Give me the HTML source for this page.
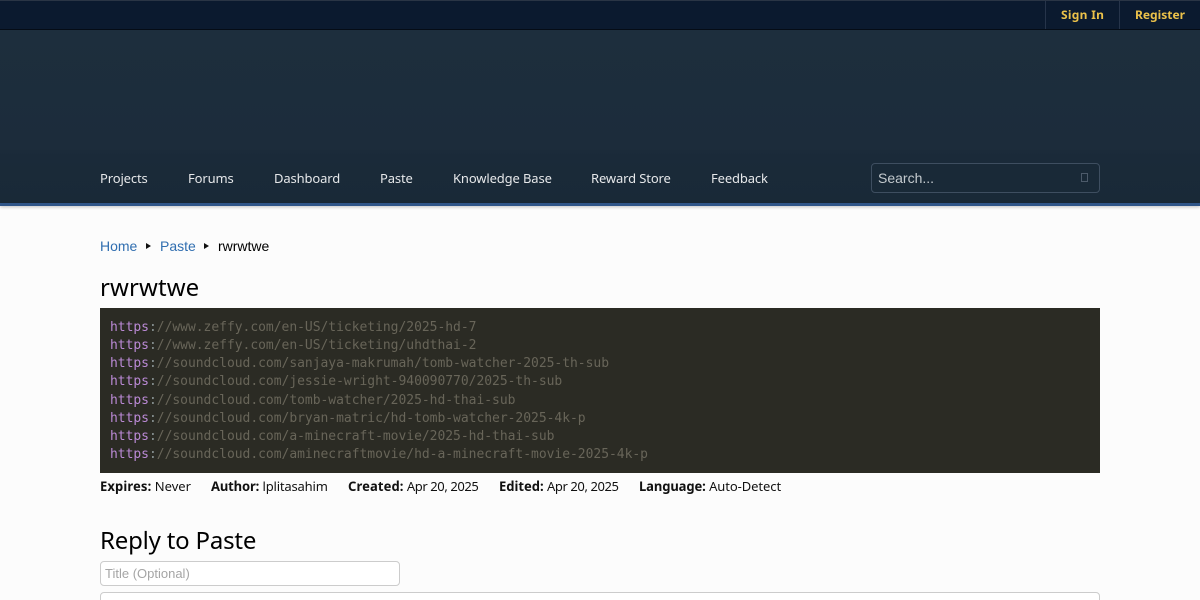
<!DOCTYPE html>
<html><head><meta charset="utf-8"><style>
*{box-sizing:border-box}
html,body{margin:0;padding:0;width:1200px;height:600px;overflow:hidden;background:#fcfcfc}
#page{position:relative;width:1200px;height:600px;overflow:hidden;background:#fcfcfc;font-family:"Noto Sans","Open Sans","Liberation Sans",sans-serif}
.abs{position:absolute;white-space:nowrap}
#top{position:absolute;left:0;top:0;width:1200px;height:30px;background:#0b1a2f;border-top:1px solid #2a3545;border-bottom:1px solid #050c16}
#hdr{position:absolute;left:0;top:30px;width:1200px;height:173px;background:linear-gradient(#1d2e3d 0,#1c2c3b 118px,#1a2a39 126px,#192937 100%)}
#line{position:absolute;left:0;top:203px;width:1200px;height:3px;background:#2f5588;box-shadow:0 1px 3px rgba(0,0,0,.25)}
.sep{position:absolute;top:1px;width:1px;height:28px;background:#26344a}
.tl{font-size:12px;font-weight:700;color:#ecc24a;top:7px;line-height:16px}
.nav{font-size:13px;color:#e6e8ea;top:169px;line-height:18px;letter-spacing:-.13px}
#search{position:absolute;left:871px;top:163px;width:229px;height:30px;border:1px solid #3e4e60;border-radius:4px;background:#192937}
#search span{position:absolute;left:6px;top:5px;font:14px/18px "Liberation Sans",sans-serif;color:#c4cace}
#search i{position:absolute;left:209px;top:9px;width:7px;height:9px;border:1px solid #4c5a6a}
.bc{font:14px/18px "Liberation Sans",sans-serif;top:237px}
.bc.a{color:#306eb0}
.ar{position:absolute;top:243px;width:0;height:0;border-left:5px solid #111;border-top:3px solid transparent;border-bottom:3px solid transparent}
h1,h2{margin:0;font-weight:400;color:#000;position:absolute;white-space:nowrap}
#code{position:absolute;left:100px;top:308px;width:1000px;height:165px;background:#2b2b24}
#code pre{position:absolute;left:10px;top:11px;margin:0;font:13px/18.14px "DejaVu Sans Mono",monospace;color:#686559;letter-spacing:-.03px}
#code b{font-weight:400;color:#bb8ad6}
#code u{text-decoration:none;color:#8a9394}
#meta{position:absolute;top:477px;left:100px;font-size:13px;line-height:18px;color:#111;white-space:nowrap}
#meta span{position:absolute;top:0}
#meta i{font-style:normal}
#t{position:absolute;left:100px;top:561px;width:300px;height:25px;background:#fff;border:1px solid #ccc;border-radius:4px;font:13px/23px "Liberation Sans",sans-serif;color:#a5a5a5;padding-left:4px}
#b{position:absolute;left:100px;top:592px;width:1000px;height:20px;background:#fff;border:1px solid #ccc;border-radius:4px}
</style></head><body><div id="page">
<div id="top"></div>
<div class="sep" style="left:1045px"></div>
<div class="sep" style="left:1119px"></div>
<div class="abs tl" style="left:1061px;letter-spacing:.3px">Sign In</div>
<div class="abs tl" style="left:1135px">Register</div>
<div id="hdr"></div>
<div id="line"></div>
<div class="abs nav" style="left:100px">Projects</div>
<div class="abs nav" style="left:188px">Forums</div>
<div class="abs nav" style="left:274px">Dashboard</div>
<div class="abs nav" style="left:380px">Paste</div>
<div class="abs nav" style="left:453px">Knowledge Base</div>
<div class="abs nav" style="left:591px">Reward Store</div>
<div class="abs nav" style="left:711px">Feedback</div>
<div id="search"><span>Search...</span><i></i></div>
<div class="abs bc a" style="left:100px">Home</div>
<div class="ar" style="left:146px"></div>
<div class="abs bc a" style="left:160px">Paste</div>
<div class="ar" style="left:204px"></div>
<div class="abs bc" style="left:218px;color:#000">rwrwtwe</div>
<h1 style="left:100px;top:272px;font-size:24px;line-height:32px;letter-spacing:.1px">rwrwtwe</h1>
<div id="code"><pre><b>https</b><u>:</u>//www.zeffy.com/en-US/ticketing/2025-hd-7
<b>https</b><u>:</u>//www.zeffy.com/en-US/ticketing/uhdthai-2
<b>https</b><u>:</u>//soundcloud.com/sanjaya-makrumah/tomb-watcher-2025-th-sub
<b>https</b><u>:</u>//soundcloud.com/jessie-wright-940090770/2025-th-sub
<b>https</b><u>:</u>//soundcloud.com/tomb-watcher/2025-hd-thai-sub
<b>https</b><u>:</u>//soundcloud.com/bryan-matric/hd-tomb-watcher-2025-4k-p
<b>https</b><u>:</u>//soundcloud.com/a-minecraft-movie/2025-hd-thai-sub
<b>https</b><u>:</u>//soundcloud.com/aminecraftmovie/hd-a-minecraft-movie-2025-4k-p</pre></div>
<div id="meta">
<span style="left:0"><b style="letter-spacing:.12px">Expires:</b> Never</span>
<span style="left:111px"><b style="letter-spacing:-.14px">Author:</b> <i style="letter-spacing:-.18px">lplitasahim</i></span>
<span style="left:248px"><b style="letter-spacing:.1px">Created:</b> <i style="letter-spacing:-.42px">Apr 20, 2025</i></span>
<span style="left:399px"><b>Edited:</b> <i style="letter-spacing:-.42px">Apr 20, 2025</i></span>
<span style="left:539px"><b style="letter-spacing:-.1px">Language:</b> <i style="letter-spacing:-.08px">Auto-Detect</i></span>
</div>
<h2 style="left:100px;top:525px;font-size:24px;line-height:32px;letter-spacing:-.2px">Reply to Paste</h2>
<div id="t">Title (Optional)</div>
<div id="b"></div>
</div></body></html>
